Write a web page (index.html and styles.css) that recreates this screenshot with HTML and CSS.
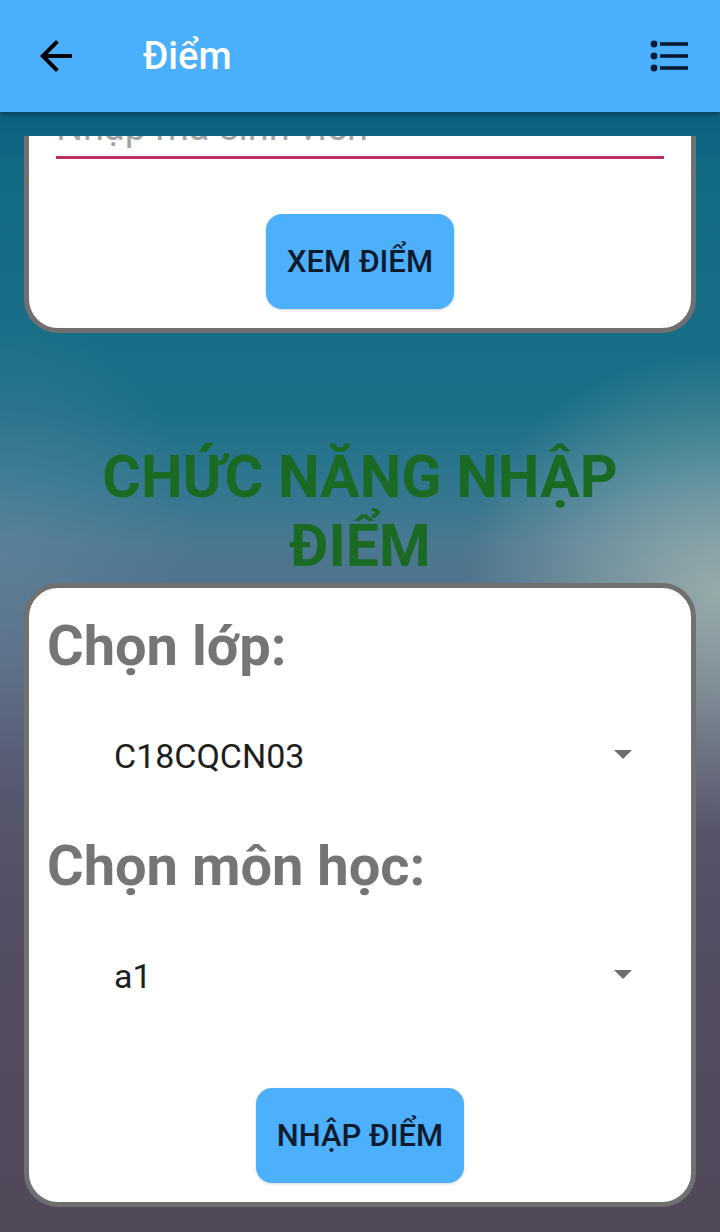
FILE: index.html
```html
<!DOCTYPE html>
<html lang="vi">
<head>
<meta charset="utf-8">
<title>Điểm</title>
<link rel="stylesheet" href="styles.css">
</head>
<body>
<div class="app">
  <header class="appbar">
    <span class="nav-icon">
      <svg width="48" height="48" viewBox="0 0 24 24"><path d="M20 11H7.83l5.59-5.59L12 4l-8 8 8 8 1.41-1.41L7.83 13H20v-2z" fill="#000"/></svg>
    </span>
    <h1 class="title">Điểm</h1>
    <span class="menu-icon">
      <svg width="40" height="32" viewBox="0 0 40 32">
        <circle cx="4" cy="4" r="3.4" fill="#0b1a33"/>
        <circle cx="4" cy="16" r="3.4" fill="#0b1a33"/>
        <circle cx="4" cy="28" r="3.4" fill="#0b1a33"/>
        <rect x="10" y="2.2" width="28" height="3.6" fill="#0b1a33"/>
        <rect x="10" y="14.2" width="28" height="3.6" fill="#0b1a33"/>
        <rect x="10" y="26.2" width="28" height="3.6" fill="#0b1a33"/>
      </svg>
    </span>
  </header>
  <main class="screen">
    <div class="scroll">
      <div class="content">
        <section class="card card-view">
          <div class="field">Nhập mã sinh viên</div>
          <button class="btn btn-view">XEM ĐIỂM</button>
        </section>
        <h2 class="section-title">CHỨC NĂNG NHẬP ĐIỂM</h2>
        <section class="card card-enter">
          <div class="label">Chọn lớp:</div>
          <div class="spinner">
            <span class="spinner-text">C18CQCN03</span>
            <svg class="caret" width="18" height="9" viewBox="0 0 18 9"><polygon points="0,0 18,0 9,9" fill="#6e6e6e"/></svg>
          </div>
          <div class="label">Chọn môn học:</div>
          <div class="spinner">
            <span class="spinner-text">a1</span>
            <svg class="caret" width="18" height="9" viewBox="0 0 18 9"><polygon points="0,0 18,0 9,9" fill="#6e6e6e"/></svg>
          </div>
          <button class="btn btn-enter">NHẬP ĐIỂM</button>
        </section>
      </div>
    </div>
  </main>
</div>
</body>
</html>
```
FILE: styles.css
```css
html, body {
  margin: 0;
  padding: 0;
}
body {
  font-family: Roboto, "Noto Sans", "Liberation Sans", sans-serif;
  background: #514859;
}
.app {
  width: 720px;
  height: 1232px;
  display: flex;
  flex-direction: column;
  overflow: hidden;
}
.appbar {
  flex: none;
  height: 112px;
  background: #4aaffd;
  display: flex;
  align-items: center;
  box-shadow: 0 2px 6px rgba(0, 0, 0, 0.35);
  position: relative;
  z-index: 2;
}
.nav-icon {
  display: flex;
  margin-left: 32px;
}
.title {
  margin: 0 0 0 63px;
  font-size: 38px;
  font-weight: 500;
  color: #ffffff;
  flex: 1;
  line-height: 44px;
}
.menu-icon {
  display: flex;
  margin-right: 30px;
}
.screen {
  flex: 1;
  min-height: 0;
  padding-top: 24px;
  box-sizing: border-box;
  background:
    radial-gradient(ellipse 260px 240px at 100% 480px, rgba(175, 190, 182, 0.75), rgba(175, 190, 182, 0) 100%),
    radial-gradient(ellipse 200px 240px at 0% 440px, rgba(110, 140, 165, 0.45), rgba(110, 140, 165, 0) 100%),
    linear-gradient(180deg, #0b6080 0px, #136a84 60px, #1b7088 300px, #2f768f 370px, #4a7891 430px, #596b82 540px, #575b72 640px, #544e64 800px, #514859 1120px);
}
.scroll {
  height: 100%;
  overflow: hidden;
}
.content {
  margin-top: -57px;
  display: flex;
  flex-direction: column;
}
.card {
  margin: 0 24px;
  border: 5px solid #707070;
  border-radius: 34px;
  background: #ffffff;
  display: flex;
  flex-direction: column;
}
.card-view {
  padding: 20px 27px 19px;
}
.field {
  font-size: 38px;
  line-height: 46px;
  color: #a3a3a3;
  padding-bottom: 6px;
  border-bottom: 3px solid #c02f62;
}
.btn {
  align-self: center;
  height: 95px;
  border: none;
  border-radius: 16px;
  background: #4cb0fd;
  color: #0e1b2d;
  font-family: Roboto, "Noto Sans", "Liberation Sans", sans-serif;
  font-size: 31px;
  font-weight: 500;
  padding: 0;
  box-shadow: 0 1px 3px rgba(0, 0, 0, 0.18);
}
.btn-view {
  width: 188px;
  margin-top: 55px;
}
.btn-enter {
  width: 208px;
  margin-top: 35px;
}
.section-title {
  margin: 109px 0 3px;
  padding: 0 60px;
  text-align: center;
  font-size: 59px;
  line-height: 69px;
  font-weight: 700;
  color: #1b6a23;
}
.card-enter {
  padding: 25px 18px 19px;
}
.label {
  font-size: 56px;
  line-height: 66px;
  font-weight: 700;
  color: #757575;
}
.spinner {
  height: 154px;
  display: flex;
  align-items: center;
  justify-content: space-between;
  padding: 0 41px 0 67px;
}
.spinner-text {
  font-size: 34px;
  line-height: 40px;
  color: #1e1e1e;
}
.caret {
  display: block;
  margin-top: -4px;
}
```
